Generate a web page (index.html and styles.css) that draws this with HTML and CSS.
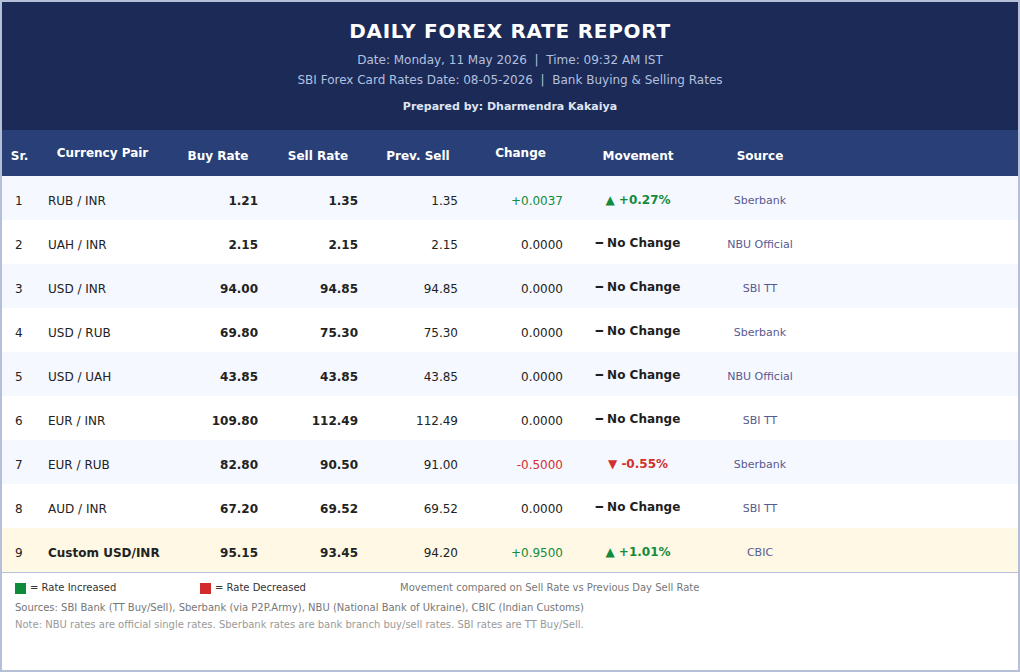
FILE: index.html
```html
<!DOCTYPE html>
<html lang="en">
<head>
<meta charset="utf-8">
<title>Daily Forex Rate Report</title>
<link rel="stylesheet" href="styles.css">
</head>
<body>
<div class="page">
  <header class="banner">
    <h1 class="title">DAILY FOREX RATE REPORT</h1>
    <p class="sub">Date: Monday, 11 May 2026 &nbsp;|&nbsp; Time: 09:32 AM IST</p>
    <p class="sub">SBI Forex Card Rates Date: 08-05-2026 &nbsp;|&nbsp; Bank Buying &amp; Selling Rates</p>
    <p class="prep">Prepared by: Dharmendra Kakaiya</p>
  </header>

  <table class="rates">
    <colgroup>
      <col class="c-sr"><col class="c-pair"><col class="c-num"><col class="c-num"><col class="c-num"><col class="c-chg"><col class="c-mv"><col class="c-src"><col>
    </colgroup>
    <thead>
      <tr>
        <th>Sr.</th>
        <th class="hi">Currency Pair</th>
        <th>Buy Rate</th>
        <th>Sell Rate</th>
        <th>Prev. Sell</th>
        <th class="hi">Change</th>
        <th>Movement</th>
        <th>Source</th>
        <th></th>
      </tr>
    </thead>
    <tbody>
      <tr class="alt">
        <td class="sr">1</td><td class="pair">RUB / INR</td><td class="num b">1.21</td><td class="num b">1.35</td><td class="num">1.35</td><td class="num up">+0.0037</td><td class="mv up">▲ +0.27%</td><td class="src">Sberbank</td><td></td>
      </tr>
      <tr>
        <td class="sr">2</td><td class="pair">UAH / INR</td><td class="num b">2.15</td><td class="num b">2.15</td><td class="num">2.15</td><td class="num">0.0000</td><td class="mv flat">━ No Change</td><td class="src">NBU Official</td><td></td>
      </tr>
      <tr class="alt">
        <td class="sr">3</td><td class="pair">USD / INR</td><td class="num b">94.00</td><td class="num b">94.85</td><td class="num">94.85</td><td class="num">0.0000</td><td class="mv flat">━ No Change</td><td class="src">SBI TT</td><td></td>
      </tr>
      <tr>
        <td class="sr">4</td><td class="pair">USD / RUB</td><td class="num b">69.80</td><td class="num b">75.30</td><td class="num">75.30</td><td class="num">0.0000</td><td class="mv flat">━ No Change</td><td class="src">Sberbank</td><td></td>
      </tr>
      <tr class="alt">
        <td class="sr">5</td><td class="pair">USD / UAH</td><td class="num b">43.85</td><td class="num b">43.85</td><td class="num">43.85</td><td class="num">0.0000</td><td class="mv flat">━ No Change</td><td class="src">NBU Official</td><td></td>
      </tr>
      <tr>
        <td class="sr">6</td><td class="pair">EUR / INR</td><td class="num b">109.80</td><td class="num b">112.49</td><td class="num">112.49</td><td class="num">0.0000</td><td class="mv flat">━ No Change</td><td class="src">SBI TT</td><td></td>
      </tr>
      <tr class="alt">
        <td class="sr">7</td><td class="pair">EUR / RUB</td><td class="num b">82.80</td><td class="num b">90.50</td><td class="num">91.00</td><td class="num down">-0.5000</td><td class="mv down">▼ -0.55%</td><td class="src">Sberbank</td><td></td>
      </tr>
      <tr>
        <td class="sr">8</td><td class="pair">AUD / INR</td><td class="num b">67.20</td><td class="num b">69.52</td><td class="num">69.52</td><td class="num">0.0000</td><td class="mv flat">━ No Change</td><td class="src">SBI TT</td><td></td>
      </tr>
      <tr class="custom">
        <td class="sr">9</td><td class="pair b">Custom USD/INR</td><td class="num b">95.15</td><td class="num b">93.45</td><td class="num">94.20</td><td class="num up">+0.9500</td><td class="mv up">▲ +1.01%</td><td class="src">CBIC</td><td></td>
      </tr>
    </tbody>
  </table>

  <footer class="foot">
    <div class="legend">
      <span class="key"><span class="sq sq-up"></span>= Rate Increased</span>
      <span class="key"><span class="sq sq-down"></span>= Rate Decreased</span>
      <span class="key muted">Movement compared on Sell Rate vs Previous Day Sell Rate</span>
    </div>
    <p class="srcs">Sources: SBI Bank (TT Buy/Sell), Sberbank (via P2P.Army), NBU (National Bank of Ukraine), CBIC (Indian Customs)</p>
    <p class="note">Note: NBU rates are official single rates. Sberbank rates are bank branch buy/sell rates. SBI rates are TT Buy/Sell.</p>
  </footer>
</div>
</body>
</html>
```

FILE: styles.css
```css
* { box-sizing: border-box; }
html, body { margin: 0; padding: 0; }
body {
  font-family: "DejaVu Sans", sans-serif;
  background: #ffffff;
  color: #222;
}
.page {
  width: 1020px;
  height: 672px;
  border: 2px solid #b6bfd8;
  background: #fff;
  overflow: hidden;
}

/* Banner */
.banner {
  background: #1b2a57;
  text-align: center;
  padding: 17px 0 15px;
}
.title {
  margin: 0;
  font-size: 20px;
  line-height: 24px;
  font-weight: bold;
  letter-spacing: 0.72px;
  color: #ffffff;
}
.sub {
  margin: 0;
  font-size: 12px;
  line-height: 20px;
  color: #b3c0df;
  white-space: pre;
}
.title + .sub { margin-top: 7px; }
.prep {
  margin: 9px 0 0;
  font-size: 11px;
  line-height: 16px;
  font-weight: bold;
  color: #dfe5f2;
}

/* Table */
.rates {
  width: 100%;
  border-collapse: collapse;
  table-layout: fixed;
  font-size: 12px;
}
.c-sr { width: 35px; }
.c-pair { width: 131px; }
.c-num { width: 100px; }
.c-chg { width: 105px; }
.c-mv { width: 130px; }
.c-src { width: 114px; }

.rates thead tr {
  background: #283f78;
  height: 46px;
}
.rates th {
  color: #ffffff;
  font-weight: bold;
  font-size: 12px;
  line-height: 14px;
  text-align: center;
  padding: 6px 0 0;
  white-space: nowrap;
}
.rates th.hi { padding-top: 0; }

.rates tbody tr { height: 44px; background: #ffffff; }
.rates tbody tr.alt { background: #f5f8ff; }
.rates tbody tr.custom { background: #fef8e5; }

.rates td {
  padding: 5px 10px 0;
  line-height: 14px;
  color: #222;
  white-space: nowrap;
}
.rates td.sr { padding-left: 13px; padding-right: 0; }
.rates td.pair { padding-left: 11px; }
.rates td.num { text-align: right; }
.rates td.mv { text-align: center; font-weight: bold; padding: 4px 0 0; }
.rates td.mv.flat { padding-top: 2px; color: #1e1e1e; }
.rates td.src { text-align: center; font-size: 11px; color: #5a5a8f; padding: 5px 0 0; }
.b { font-weight: bold; }
.rates td.up { color: #138a3c; }
.rates td.down { color: #d32f2f; }

/* Footer */
.foot {
  border-top: 1px solid #b6bfd8;
  padding: 7px 13px 0;
}
.legend {
  display: grid;
  grid-template-columns: 185px 200px auto;
  height: 16px;
  align-items: center;
  font-size: 10px;
  line-height: 16px;
  color: #333;
}
.key { display: flex; align-items: center; white-space: nowrap; }
.sq {
  display: inline-block;
  width: 11px;
  height: 11px;
  margin-right: 4px;
}
.sq-up { background: #0e8a3c; }
.sq-down { background: #d32b2b; }
.muted { color: #777; }
.srcs, .note {
  margin: 0;
  font-size: 10px;
  line-height: 17px;
  white-space: nowrap;
}
.srcs { margin-top: 3px; color: #777; }
.note { color: #9a9a9a; }
```
